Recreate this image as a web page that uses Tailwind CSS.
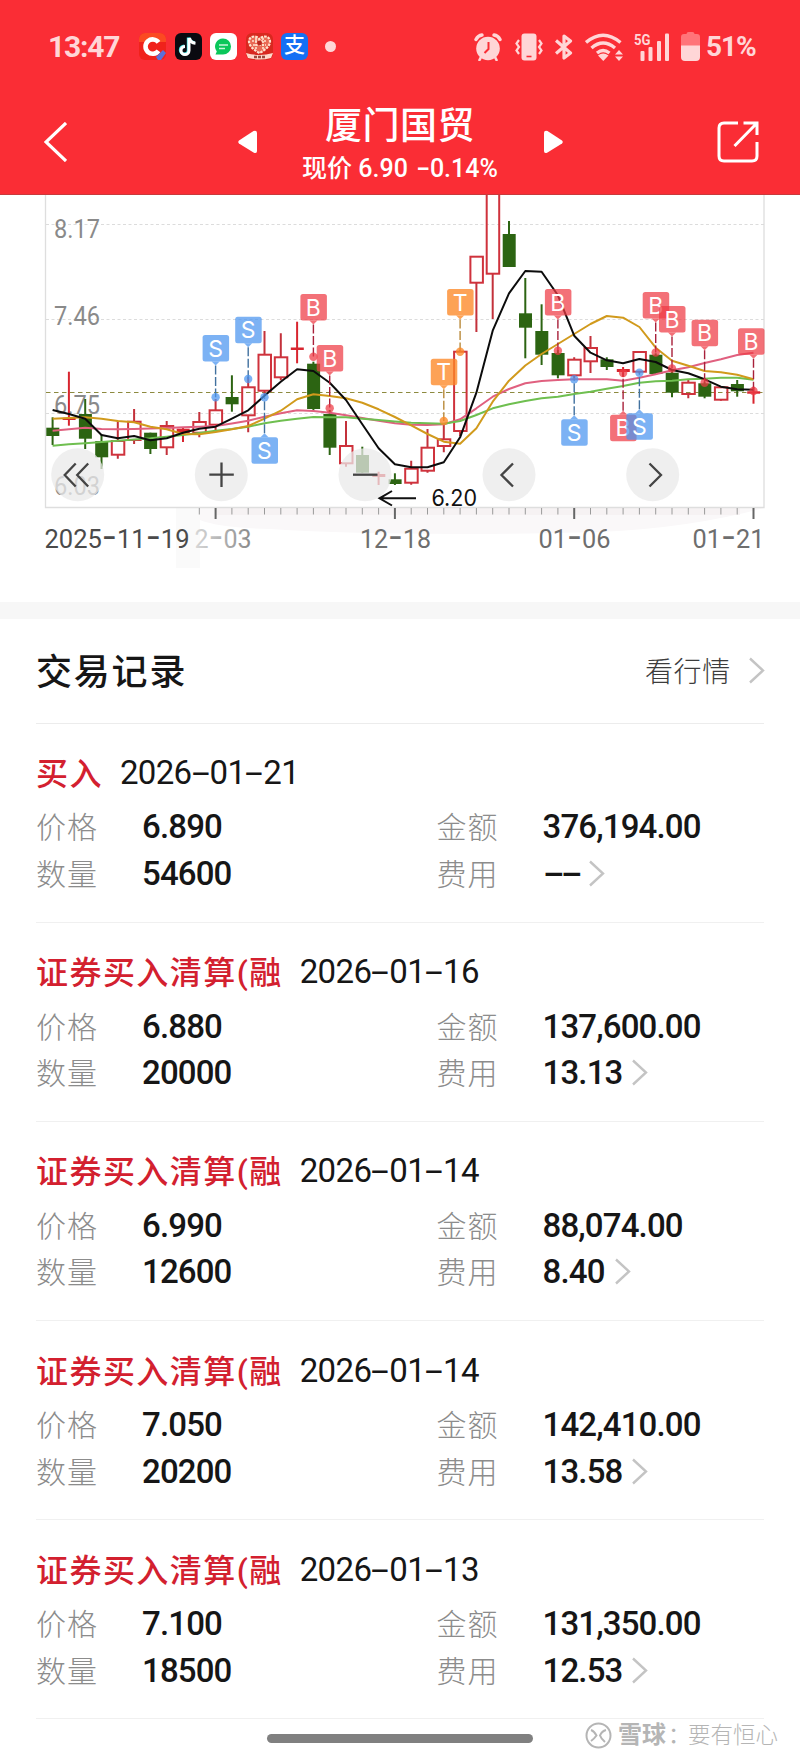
<!DOCTYPE html>
<html lang="zh-CN">
<head>
  <meta charset="UTF-8" />
  <meta name="viewport" content="width=device-width, initial-scale=1.0" />
  <title>厦门国贸 交易记录</title>
  <script src="https://cdn.jsdelivr.net/npm/@tailwindcss/browser@4"></script>
</head>
<body class="w-[800px] h-[1760px] overflow-hidden bg-white text-[#161616] font-['Roboto','Noto_Sans_CJK_SC',sans-serif]">

  <!-- Header -->
  <header class="h-[195px] bg-[#fa2d35] border-b border-[#c93a3c] text-white">
    <!-- Status bar -->
    <div class="h-[93px] pl-[48px] pr-[42px] flex items-center justify-between text-[#ffd6d7]">
      <div class="flex items-center">
        <span class="w-[91px] text-[30px] font-bold leading-none tracking-[-1.2px]">13:47</span>
        <div class="flex gap-[8.5px]">
          <svg class="w-[27px] h-[27px]" viewBox="0 0 27 27">
            <rect width="27" height="27" rx="6" fill="#f0221b" />
            <path d="M0 9V6a6 6 0 0 1 6-6h15a6 6 0 0 1 6 6v3z" fill="#fb4a22" />
            <path d="M19.500 9.300a7.200 7.200 0 1 0 0 8.600" fill="none" stroke="#fff" stroke-width="4.600" />
            <path d="M17 24l7-7 3 3-5 7h-3z" fill="#5d6fd8" />
          </svg>
          <svg class="w-[27px] h-[27px]" viewBox="0 0 27 27">
            <rect width="27" height="27" rx="6" fill="#0a0a10" />
            <path d="M14 5v12.500a4 4 0 1 1-4-4M14.500 5c.5 3.500 3 5 6 5.300" fill="none" stroke="#3fe0e0" stroke-width="3" transform="translate(-.7 -.6)" />
            <path d="M14 5v12.500a4 4 0 1 1-4-4M14.500 5c.5 3.500 3 5 6 5.300" fill="none" stroke="#fff" stroke-width="3" />
          </svg>
          <svg class="w-[27px] h-[27px]" viewBox="0 0 27 27">
            <rect width="27" height="27" rx="6" fill="#fff" />
            <path d="M13 5.500a8 8 0 1 1 0 16H5.500l1.300-3A8 8 0 0 1 13 5.500z" fill="#0ac75a" />
            <path d="M9 12h9M9 15.500h6" stroke="#c8f5da" stroke-width="1.500" />
          </svg>
          <svg class="w-[27px] h-[27px]" viewBox="0 0 27 27">
            <rect width="27" height="27" rx="6" fill="#d8281f" />
            <path d="M13.500 20C6 16 3 12 3 8.500 3 2.500 11 2 13.500 6.500 16 2 24 2.500 24 8.500 24 12 21 16 13.500 20z" fill="#e96a55" stroke="#ffe3cf" stroke-width="2.200" stroke-dasharray="2.600 1" />
            <path d="M6 8h15M7 12h13M10 5v11M17 5v11" stroke="#ffe3cf" stroke-width="1.600" stroke-dasharray="2 1" />
            <circle cx="13.500" cy="10" r="2.400" fill="#b9281f" />
            <path d="M0 20q13.500 4 27 0l-2 5q-11.500 3-23 0z" fill="#ffd9cc" />
            <path d="M8 24h11" stroke="#9b4a3e" stroke-width="2.400" stroke-dasharray="3 1" />
          </svg>
          <span class="w-[27px] h-[27px] rounded-[6px] bg-[#1570f4] text-white text-[21px] font-medium leading-[25px] text-center">支</span>
        </div>
        <span class="ml-[17px] w-[11px] h-[11px] rounded-full bg-[#ffd6d7]"></span>
      </div>
      <div class="flex items-center">
        <!-- Alarm -->
        <svg class="w-[28px] h-[28px]" viewBox="0 0 28 28" fill="none" stroke="currentColor">
          <circle cx="14" cy="15.500" r="11.800" fill="currentColor" stroke="none" />
          <path d="M2 6.500Q4 2.500 8 2M26 6.500Q24 2.500 20 2" stroke-width="3.400" stroke-linecap="round" />
          <path d="M7 24l-1.500 3M21 24l1.500 3" stroke-width="2.600" stroke-linecap="round" />
          <path d="M14.500 9v7l-4 4" stroke="#fa2d35" stroke-width="2" />
        </svg>
        <!-- Vibrate -->
        <svg class="ml-[13px] w-[28px] h-[28px]" viewBox="0 0 28 28" fill="none" stroke="currentColor">
          <rect x="6.500" y="0.500" width="15" height="27" rx="3" fill="currentColor" stroke="none" />
          <path d="M11.500 23.500h5" stroke="#fa2d35" stroke-width="1.600" />
          <path d="M4 7L1.500 10.500 4 14 1.500 17.500 4 21M24 7l2.500 3.500L24 14l2.500 3.500L24 21" stroke-width="2.200" />
        </svg>
        <!-- Bluetooth -->
        <svg class="ml-[12px] w-[18px] h-[28px]" viewBox="0 0 18 28" fill="none" stroke="currentColor" stroke-width="3.200">
          <path d="M1 7.500l14.500 12.500L9 25V3l6.500 5L1 20.500" stroke-linejoin="round" />
        </svg>
        <!-- Wi-Fi -->
        <svg class="ml-[12px] w-[38px] h-[28px]" viewBox="0 0 38 28" fill="none" stroke="currentColor" stroke-width="3.400">
          <path d="M1 9.500Q18 -5 35.500 9.500M6.500 15Q18 5 30 15M12 20Q18 15 24.500 20" />
          <path d="M13 22.500q5.300-4 10.500 0L18.300 28z" fill="currentColor" stroke="none" />
          <path d="M30 21.500l4-4.500 4 4.500zM30 23.500l4 4.500 4-4.500z" fill="currentColor" stroke="none" />
        </svg>
        <!-- 5G signal -->
        <svg class="ml-[11px] w-[35px] h-[28px]" viewBox="0 0 35 28" fill="currentColor">
          <text x="0" y="11.500" font-size="15.500" font-weight="700" textLength="16.500" lengthAdjust="spacingAndGlyphs">5G</text>
          <rect x="6.500" y="18" width="4" height="10" rx="1" />
          <rect x="14.500" y="14" width="4" height="14" rx="1" />
          <rect x="23" y="8" width="4" height="20" rx="1" />
          <rect x="31" y="0.500" width="4" height="27.500" rx="1" />
        </svg>
        <!-- Battery -->
        <svg class="ml-[12px] w-[19px] h-[29px]" viewBox="0 0 19 29" fill="currentColor">
          <path d="M0 14V5q0-3 3-3h2.500q0-2 2-2h4q2 0 2 2H16q3 0 3 3v9z" fill="#ff7479" />
          <path d="M0 13.500h19V25q0 4-4 4H4q-4 0-4-4z" />
        </svg>
        <span class="ml-[6px] w-[52px] text-[28px] font-bold leading-none tracking-[-1.1px] whitespace-nowrap pt-[1px]">51%</span>
      </div>
    </div>

    <!-- Title bar -->
    <div class="h-[101px] pl-[44px] pr-[41px] flex items-center">
      <svg class="w-[23px] h-[40px] mb-[3px]" viewBox="0 0 23 40" fill="none" stroke="currentColor" stroke-width="3.200">
        <path d="M22 1L2 20l20 19" />
      </svg>
      <div class="ml-[170.500px] flex items-center">
        <svg class="w-[19px] h-[24px] mb-[3px]" viewBox="0 0 19 24" fill="currentColor"><path d="M1 10.500L15.500 1Q19 0 19 3v18q0 3-3.500 1.500L1 13.500Q-.500 12 1 10.500z" /></svg>
        <div class="w-[287px] text-center">
          <h1 class="text-[37px] leading-[46px] font-medium mt-[4px] tracking-[0.500px]">厦门国贸</h1>
          <p class="text-[25px] leading-[38px] font-medium whitespace-nowrap flex justify-center"><span>现价 6.90</span><span class="ml-[8px] w-[9px] scale-x-[1.6] origin-left">-</span><span class="ml-[5px]">0.14%</span></p>
        </div>
        <svg class="w-[19px] h-[24px] mb-[3px]" viewBox="0 0 19 24" fill="currentColor"><path d="M18 10.500L3.500 1Q0 0 0 3v18q0 3 3.500 1.500L18 13.500Q19.500 12 18 10.500z" /></svg>
      </div>
      <svg class="ml-auto mb-[3px] w-[42px] h-[42px]" viewBox="0 0 42 42" fill="none" stroke="currentColor" stroke-width="3">
        <path d="M21 2H7Q2 2 2 7v28q0 5 5 5h28q5 0 5-5V21" />
        <path d="M26.500 2H40v12M40 2L17.500 25" />
      </svg>
    </div>
  </header>

  <!-- K-line chart, drawn by the script below -->
  <svg id="chart" class="block w-[800px] h-[407px]" viewBox="0 195 800 407"></svg>

  <div class="h-[16.500px] bg-[#f7f7f7]"></div>

  <!-- Trade records -->
  <main class="px-[36px]">
    <div class="h-[105px] pt-[5px] flex items-center justify-between border-b border-[#ececec]">
      <h2 class="text-[36px] leading-none font-medium tracking-[1.800px]">交易记录</h2>
      <a class="flex items-center gap-[18px] text-[28px] leading-none font-light tracking-[0.700px] text-[#3c3c3c]">看行情
        <svg class="w-[16px] h-[27px] mb-[5px] -mr-[1px]" viewBox="0 0 16 27" fill="none" stroke="#c4c4c4" stroke-width="2.400"><path d="M1 1.500l13 12-13 12" /></svg>
      </a>
    </div>
    <div id="records"></div>
  </main>

  <footer class="relative h-[40px]">
    <div class="absolute left-[267px] top-[15px] w-[266px] h-[9px] rounded-full bg-[#808080]"></div>
    <div class="absolute right-[22px] top-[1px] flex items-center gap-[6px] text-[#b5b5b5]">
      <svg class="w-[27px] h-[27px]" viewBox="0 0 27 27" fill="none" stroke="currentColor" stroke-width="2">
        <circle cx="13.500" cy="13.500" r="12" />
        <path d="M6 8q3 1 5.500 5.500Q9 17 6 19M21 8q-4 1-6 5.500 1 3 5 6.500" />
      </svg>
      <span class="text-[22.500px] leading-[30px] whitespace-nowrap flex"><b class="w-[50px] text-[24px] font-bold">雪球</b><span class="w-[20px]">：</span><span class="font-light">要有恒心</span></span>
    </div>
  </footer>

  <script>
    // [high, body top, body bottom, low, kind] : g = filled green, r = hollow red, x = filled red
    const candles = [
      [417.3,427.7,436,445,'g'], [371.7,417.7,420,425.7,'x'], [399,414,438.7,449,'g'], [434,441,457.3,469,'g'],
      [420.7,441,454.7,458.7,'r'], [409,421.7,440,444,'r'], [432.7,432.7,449,454,'g'], [421,426,447.3,455,'r'],
      [427.5,428.7,433.3,442,'x'], [412,422,432.7,437.3,'r'], [399,410.3,424.7,430.7,'r'], [375.3,397,404.3,411.7,'g'],
      [376.7,387.3,415.3,432.3,'r'], [331,354.7,390.7,395,'r'], [333.3,357.3,377.3,380.3,'r'], [321.7,347.5,350,363.3,'x'],
      [361.7,363.7,409,410.7,'g'], [410,414,447.7,455,'g'], [421,446,463.3,466.7,'r'], [446.7,455,472.7,473,'g'],
      [471.7,474,477,485,'x'], [473.3,479.3,484,485,'g'], [460.7,468.7,482.7,484.7,'r'], [429,447.7,470.7,472.7,'r'],
      [423,439.3,446,452.3,'r'], [350,351.7,431,436,'r'], [256,256.7,282.7,332,'r'], [180,180,273.7,319,'r'],
      [221,234,267,267,'g'], [278,313.3,327.7,358.3,'g'], [304.3,331,354.7,365,'g'], [350,353,375.3,378.3,'g'],
      [357.3,359.7,375.3,380,'r'], [336,348,361.3,373,'r'], [357.3,359.3,367,370,'g'], [367,369,372,377,'x'],
      [351,352,371.7,373.3,'r'], [353.3,354.7,374,374,'g'], [370,372.7,392.7,397.3,'g'], [380,382.7,394,398.3,'r'],
      [381.7,383.3,396.7,398.3,'g'], [386.7,387.3,399.7,400.7,'r'], [380,384,391.3,396.7,'g'], [386.7,391.3,393.7,403.7,'x']
    ];

    // Moving averages, one y per candle
    const averages = {
      '#e0607f': [430.7,429.3,427.7,429,429.3,429,428.5,428,427.3,426.7,426,423.5,420.7,416.7,413.3,410.3,411,412.7,415.3,418,420.7,423.3,424.7,425,424.3,419.3,408.3,396.7,389,383.3,381,380,379.3,379.3,379.3,380.7,377.7,374.3,370.3,367.3,363,359.3,355,352.7],
      '#6fbf50': [445.7,444.3,443.3,442,440.7,439.5,438.3,436.7,435,433,430.7,429,426.7,423.3,420.7,418.7,417,417.3,417.3,418.7,420,421.5,422.7,423.3,423.7,421,415,408.3,404.3,401,398.3,396.7,394,391.7,388.7,386,382.7,381.3,380.7,379.3,378.7,377.7,377.7,379.7],
      '#d19a1c': [418.7,418,417.3,418.7,421,422.3,426.7,429.3,434,434.3,432,429.3,426,418.7,410.7,399.3,394.3,396,398.3,402.7,409.3,417,425.3,434,441.7,443.7,428.3,401.7,380.7,365.5,354,344,334,324,316,317.7,327,347.7,360.7,365.7,371,372.3,374.7,379.3],
      '#0c0c0c': [410,414,418.7,435,438.3,436,440.3,438.3,432.7,428.7,426.7,418.7,410.3,395.7,381.7,369.3,371,382.7,400,424.3,448.3,464.3,467.3,467.3,462.3,437.3,392.7,330.7,293.3,271,271.7,295.3,335.7,352.7,360.3,363.3,359,362,370,373.3,379.3,386.7,389.3,389.7]
    };

    // [candle index, letter, box top, dot y, x shift]
    const markers = [
      [10,'S',335,397.3,0], [12,'S',316.7,379,0], [13,'S',437.3,397.3,0], [16,'B',294,356.7,0], [17,'B',345,408.3,0],
      [25,'T',289,351.7,0], [24,'T',358.7,421,0], [31,'B',289,350.7,0], [32,'S',419.3,379.3,0], [35,'B',414.7,373,0],
      [36,'S',413.3,372.7,0], [37,'B',292,352.5,0], [38,'B',306,368.5,0], [40,'B',319.7,382.7,0], [43,'B',328.3,391,-2.5]
    ];
    const markerColors = {
      S: ['rgba(74,148,240,.72)', '#41719f'],
      B: ['rgba(238,58,68,.72)', '#a8203a'],
      T: ['rgba(252,136,38,.78)', '#b98a3a']
    };

    const cx = i => 52.6 + i * 16.3;
    const label = (x, y, w, t, fill) =>
      `<text x="${x}" y="${y}" font-size="25.5" fill="${fill}" textLength="${w}" lengthAdjust="spacingAndGlyphs">${t.replaceAll('-', '<tspan font-family="Inter" font-size="33">-</tspan>')}</text>`;

    function drawChart() {
      let s = '';
      // Soft band behind the time axis
      s += '<path d="M200 508H764Q690 528 600 532 400 537 270 529 220 528 200 520z" fill="#faf8f9"/><path d="M216 508H740V515H216z" fill="#f6f2f3"/>';
      s += '<path d="M176 508h24v60h-24z" fill="#fafafa"/>';
      s += '<path d="M45.500 195V507.500H764V195" fill="none" stroke="#dedede" stroke-width="1.300"/>';
      [224.5, 319.5, 413.5].forEach(y => {
        s += `<path d="M46 ${y}H764" stroke="#dcdcdc" stroke-dasharray="3 2.500"/>`;
      });

      s += label(54, 237.5, 46, '8.17', '#8a8a8a') + label(54, 325, 46, '7.46', '#8a8a8a');
      s += label(54, 413.5, 46, '6.75', '#8a8a8a') + label(54, 494.5, 46, '6.03', '#8a8a8a');
      s += '<path d="M46 392.500H764" stroke="#8d8a3f" stroke-width="1.200" stroke-dasharray="4.500 3.500"/>';

      candles.forEach(([h, t, b, l, k], i) => {
        const x = cx(i);
        if (k === 'r') {
          s += `<path d="M${x} ${h}V${t}M${x} ${b}V${l}" stroke="#c3313b" stroke-width="2"/>`;
          s += `<rect x="${x - 6}" y="${t}" width="12.500" height="${b - t}" fill="none" stroke="#cf323c" stroke-width="2"/>`;
        } else {
          const c = k === 'g' ? '#2c6412' : '#d8252f';
          s += `<path d="M${x} ${h}V${l}" stroke="${c}" stroke-width="2"/>`;
          s += `<rect x="${x - 6.3}" y="${t}" width="13" height="${b - t}" fill="${c}"/>`;
        }
      });

      // Time axis ticks
      for (let i = 9; i < candles.length; i++) {
        const big = i === 10 || i === 21 || i === 32 || i === 43;
        s += `<path d="M${cx(i)} 508V${big ? 519 : 514.5}" stroke="${big ? '#666' : '#9a9a9a'}" stroke-width="${big ? 2 : 1}"/>`;
      }

      // Round chart controls
      const icons = {
        77.7: 'M75.700 463.500l-11 11.500 11 11.500M88.200 463.500l-11 11.500 11 11.500',
        221.3: 'M209.300 474.700h24.500M221.500 462.500v24.500',
        365: 'M353 474.700h24.500',
        509: 'M513 463.500l-11.500 11.500 11.500 11.500',
        652.7: 'M649.500 463.500l11.500 11.500-11.500 11.500'
      };
      for (const x in icons) {
        s += `<circle cx="${x}" cy="474.700" r="26.500" fill="rgba(234,234,234,.75)"/>`;
        s += `<path d="${icons[x]}" fill="none" stroke="#444" stroke-width="2.300"/>`;
      }

      for (const color in averages) {
        const pts = averages[color].map((y, i) => cx(i).toFixed(1) + ',' + y).join(' ');
        s += `<polyline points="${pts}" fill="none" stroke="${color}" stroke-width="2" stroke-linejoin="round"/>`;
      }

      markers.forEach(([i, letter, top, dot, dx]) => {
        const x = cx(i), c = x + dx, [fill, line] = markerColors[letter];
        const above = top < dot;
        const edge = above ? top + 26.5 : top;
        const tip = above ? edge + 4 : edge - 4;
        s += `<path d="M${x} ${tip}V${dot}" stroke="${line}" stroke-width="1.400" stroke-dasharray="9 2.500"/>`;
        s += `<circle cx="${x}" cy="${dot}" r="4.200" fill="${fill}"/>`;
        s += `<rect x="${c - 13}" y="${top}" width="26.500" height="26.500" rx="2.500" fill="${fill}"/>`;
        s += `<path d="M${x - 4} ${edge}L${x} ${tip}L${x + 4} ${edge}z" fill="${fill}"/>`;
        s += `<text x="${c}" y="${top + 21.5}" font-family="Inter" font-size="23" fill="#fff" text-anchor="middle">${letter}</text>`;
      });

      s += '<path d="M416 498.300H380M392 491l-12.500 7.300L392 505.500" fill="none" stroke="#111" stroke-width="2"/>';
      s += '<text x="431.500" y="505.500" font-family="Inter" font-size="22.500" fill="#111" textLength="45.500" lengthAdjust="spacingAndGlyphs">6.20</text>';

      s += label(44.5, 547.5, 145, '2025-11-19', '#4a4a4a') + label(194.5, 547.5, 57, '2-03', 'url(#fade)');
      s += label(360, 547.5, 71, '12-18', '#6e6e6e') + label(538.5, 547.5, 72, '01-06', '#6e6e6e') + label(692.5, 547.5, 72, '01-21', '#6e6e6e');
      s += '<defs><linearGradient id="fade"><stop offset="0" stop-color="#d8d8d8"/><stop offset="1" stop-color="#8a8a8a"/></linearGradient></defs>';
      document.getElementById('chart').innerHTML = s;
    }

    const records = [
      { type: '买入', date: '2026-01-21', price: '6.890', amount: '376,194.00', count: '54600', fee: '--' },
      { type: '证券买入清算(融', date: '2026-01-16', price: '6.880', amount: '137,600.00', count: '20000', fee: '13.13' },
      { type: '证券买入清算(融', date: '2026-01-14', price: '6.990', amount: '88,074.00', count: '12600', fee: '8.40' },
      { type: '证券买入清算(融', date: '2026-01-14', price: '7.050', amount: '142,410.00', count: '20200', fee: '13.58' },
      { type: '证券买入清算(融', date: '2026-01-13', price: '7.100', amount: '131,350.00', count: '18500', fee: '12.53' }
    ];

    // Stretch hyphens to the width of a digit
    const dash = t => t.replaceAll('-', '<span class="inline-block w-[18px] origin-left scale-x-[1.95]">-</span>');

    function drawRecords() {
      const arrow = '<svg class="ml-[10px] w-[16px] h-[27px]" viewBox="0 0 16 27" fill="none" stroke="#c4c4c4" stroke-width="2.400"><path d="M1 1.500l13 12-13 12"/></svg>';
      const cell = (name, value, extra = '') => `
        <div class="flex items-center h-[46.700px]">
          <span class="w-[106px] text-[30px] font-light tracking-[1px] text-[#8c8c8c] leading-none pt-[3px]">${name}</span>
          <span class="flex items-center text-[33px] font-medium tracking-[-0.850px] leading-none">${dash(value)}</span>${extra}
        </div>`;
      document.getElementById('records').innerHTML = records.map(r => `
        <section class="h-[199.200px] pt-[27px] border-b border-[#f0f0f0]">
          <div class="h-[53px] pb-[6px] flex items-center">
            <h3 class="text-[32px] leading-none font-medium tracking-[1.450px] text-[#d3202f]">${r.type}</h3>
            <time class="ml-[17px] pb-[3px] text-[33px] leading-none tracking-[-0.650px]">${dash(r.date)}</time>
          </div>
          <div class="grid grid-cols-[400.500px_1fr]">
            ${cell('价格', r.price)}${cell('金额', r.amount)}
            ${cell('数量', r.count)}${cell('费用', r.fee, arrow)}
          </div>
        </section>`).join('');
    }

    drawChart();
    drawRecords();
  </script>
</body>
</html>
